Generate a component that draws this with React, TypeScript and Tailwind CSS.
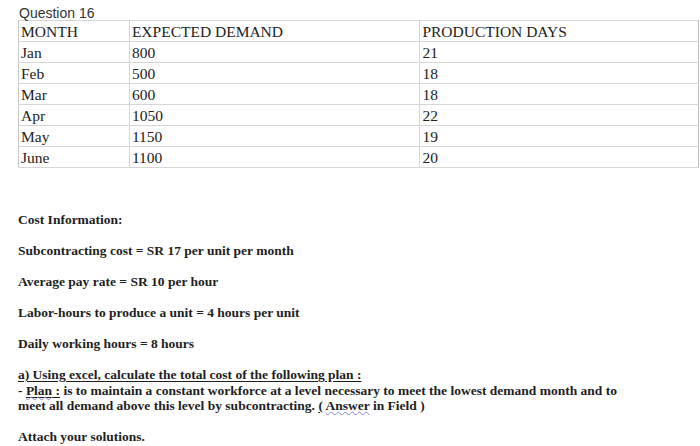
import React from 'react';

const rows = [
  ['Jan', '800', '21'],
  ['Feb', '500', '18'],
  ['Mar', '600', '18'],
  ['Apr', '1050', '22'],
  ['May', '1150', '19'],
  ['June', '1100', '20'],
];

const App: React.FC = () => {
  return (
    <div className="w-[700px] h-[446px] bg-white overflow-hidden text-[#1e1e1e]">
      <div className="pl-[19px] pt-[6px] h-[20px] text-[14px] leading-[14px] text-[#333] font-['Liberation_Sans',Arial,sans-serif]">
        Question 16
      </div>

      {/* demand table */}
      <table className="ml-[18px] w-[681px] border-collapse font-['Liberation_Serif','Times_New_Roman',serif] text-[15.5px] text-[#222]">
        <colgroup>
          <col className="w-[111px]" />
          <col className="w-[291px]" />
          <col className="w-[279px]" />
        </colgroup>
        <tbody>
          <tr className="h-[21px]">
            <td className="border border-[#d6d6d6] border-l-[#c8c8c8] px-[2px] pt-[2px] pb-0 leading-[18px]">MONTH</td>
            <td className="border border-[#d6d6d6] px-[2px] pt-[2px] pb-0 leading-[18px]">EXPECTED DEMAND</td>
            <td className="border border-[#d6d6d6] border-r-[#bdbdbd] px-[2px] pt-[2px] pb-0 leading-[18px]">PRODUCTION DAYS</td>
          </tr>
          {rows.map((r) => (
            <tr key={r[0]} className="h-[20.5px]">
              <td className="border border-[#d6d6d6] border-l-[#c8c8c8] px-[2px] pt-[2px] pb-0 leading-[18px]">{r[0]}</td>
              <td className="border border-[#d6d6d6] px-[2px] pt-[2px] pb-0 leading-[18px]">{r[1]}</td>
              <td className="border border-[#d6d6d6] border-r-[#bdbdbd] px-[2px] pt-[2px] pb-0 leading-[18px]">{r[2]}</td>
            </tr>
          ))}
        </tbody>
      </table>

      <div className="pl-[18px] pt-[44px] font-['Liberation_Serif','Times_New_Roman',serif] font-bold text-[13.5px] leading-[15.5px]">
        <p>Cost Information:</p>
        <p className="mt-[15.5px]">Subcontracting cost = SR 17 per unit per month</p>
        <p className="mt-[15.5px]">Average pay rate = SR 10 per hour</p>
        <p className="mt-[15.5px]">Labor-hours to produce a unit = 4 hours per unit</p>
        <p className="mt-[15.5px]">Daily working hours = 8 hours</p>
        <p className="mt-[15.5px] underline underline-offset-2">a) Using excel, calculate the total cost of the following plan :</p>
        <p className="whitespace-nowrap">
          - <span className="underline underline-offset-2"><span className="underline decoration-wavy decoration-[#8a8ad8] decoration-1 underline-offset-[1px]">Plan</span> :</span> is to maintain a constant workforce at a level necessary to meet the lowest demand month and to
          <br />
          meet all demand above this level by subcontracting. <span className="underline underline-offset-2">(</span> <span className="underline decoration-wavy decoration-[#8a8ad8] decoration-1 underline-offset-[1px]">Answer</span> in Field )
        </p>
        <p className="mt-[15.5px]">Attach your solutions.</p>
      </div>
    </div>
  );
};

export default App;
